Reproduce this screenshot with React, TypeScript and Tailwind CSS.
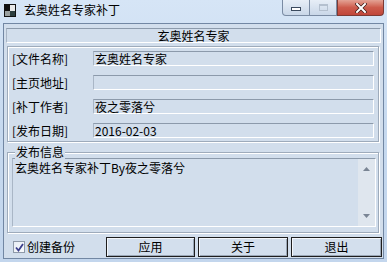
import React from "react";

const sunken =
  "border-t border-l border-t-[#8c9aab] border-l-[#a9b6c6] border-b border-r border-b-white border-r-white";

function Field({ label, value }: { label: string; value: string }) {
  return (
    <div className="flex items-center h-[15px]">
      <div className="w-[85px] pl-[4px] text-[12px] leading-[15px] text-black whitespace-nowrap">{label}</div>
      <div className={`w-[281px] h-[15px] ${sunken} text-[12px] leading-[13px] pl-[1px] text-black whitespace-nowrap`}>
        {value}
      </div>
    </div>
  );
}

function Btn({ children, w }: { children: React.ReactNode; w: string }) {
  return (
    <div
      className={`${w} h-[20px] border border-[#1e1e1e] shadow-[inset_1px_1px_0_#f4f7fb,inset_-1px_-1px_0_#9aa7b7] bg-[#d3dfed] flex items-center justify-center text-[12px] leading-none text-black`}
    >
      {children}
    </div>
  );
}

export default function App() {
  return (
    <div className="w-[387px] h-[262px] overflow-hidden bg-gradient-to-b from-[#d6e5f6] via-[#c6d9ef] to-[#c3d6ed] flex flex-col font-['Noto_Sans_CJK_SC','Noto_Sans',sans-serif]">
      {/* Title bar */}
      <div className="h-[23px] flex items-start shrink-0">
        <div className="ml-[4px] mt-[4px] w-[12px] h-[13px] grid grid-cols-2 grid-rows-2 border border-[#111]">
          <div className="bg-[#101010]" />
          <div className="bg-[#e8e8e8]" />
          <div className="bg-[#9aa0a0]" />
          <div className="bg-[#2c3e3e]" />
        </div>
        <div className="ml-[8px] mt-[3px] text-[12px] leading-[14px] text-black whitespace-nowrap">玄奥姓名专家补丁</div>
        <div className="ml-auto mr-[3px] flex h-[16px]">
          <div className="w-[28px] h-[16px] border border-[#7a8ba3] border-t-0 rounded-bl-[4px] bg-gradient-to-b from-[#e7eef7] to-[#c9d7e8] flex items-center justify-center">
            <div className="mt-[3px] w-[10px] h-[4px] bg-white border border-[#3b4a5e]" />
          </div>
          <div className="w-[27px] h-[16px] border-b border-r border-[#7a8ba3] bg-gradient-to-b from-[#e7eef7] to-[#c9d7e8] flex items-center justify-center">
            <div className="w-[9px] h-[7px] border border-[#b4c0cf] border-t-2" />
          </div>
          <div className="w-[47px] h-[16px] border border-t-0 border-[#7d3a34] rounded-br-[4px] bg-gradient-to-b from-[#e3a295] via-[#cd5b4c] to-[#c0463a] flex items-center justify-center">
            <svg width="12" height="10" viewBox="0 0 12 10">
              <path d="M2 1 L10 9 M10 1 L2 9" stroke="#3b1a16" strokeWidth="3.4" strokeLinecap="square" />
              <path d="M2 1 L10 9 M10 1 L2 9" stroke="#ffffff" strokeWidth="2" strokeLinecap="square" />
            </svg>
          </div>
        </div>
      </div>

      {/* Client area */}
      <div className="mx-[3px] h-[236px] border border-[#7287a3] bg-[#d2deec] flex flex-col shrink-0">
        {/* Header */}
        <div className={`mt-[4px] ml-[2px] w-[375px] h-[15px] ${sunken} flex items-center justify-center text-[12px] leading-[13px] text-black`}>
          玄奥姓名专家
        </div>

        {/* Group 1 */}
        <div className="mt-[3px] ml-[3px] w-[372px] h-[96px] border border-[#9eabbb] shadow-[inset_1px_1px_0_#ffffff,1px_1px_0_#ffffff] flex flex-col gap-[9px] pt-[4px]">
          <Field label="[文件名称]" value="玄奥姓名专家" />
          <Field label="[主页地址]" value="" />
          <Field label="[补丁作者]" value="夜之零落兮" />
          <Field label="[发布日期]" value="2016-02-03" />
        </div>

        {/* Group 2 */}
        <div className="relative mt-[10px] ml-[3px] w-[372px] h-[81px] border border-[#9eabbb] shadow-[inset_1px_1px_0_#ffffff,1px_1px_0_#ffffff] pt-[5px] pl-[4px]">
          <div className="absolute left-[7px] top-[-9px] bg-[#d2deec] px-[1px] text-[12px] leading-[15px] text-black">发布信息</div>
          <div className={`w-[364px] h-[69px] ${sunken} flex`}>
            <div className="flex-1 pl-[2px] pt-[1px] text-[12px] leading-[15px] text-black whitespace-nowrap">
              玄奥姓名专家补丁By夜之零落兮
            </div>
            <div className="w-[17px] h-full bg-[#dfe6ee] flex flex-col items-center justify-between py-[8px]">
              <svg width="7" height="4" viewBox="0 0 7 4"><path d="M0 4 L3.5 0 L7 4 Z" fill="#7a8594" /></svg>
              <svg width="7" height="4" viewBox="0 0 7 4"><path d="M0 0 L3.5 4 L7 0 Z" fill="#7a8594" /></svg>
            </div>
          </div>
        </div>

        {/* Bottom row */}
        <div className="mt-[4px] flex items-start h-[20px]">
          <div className="ml-[9px] mt-[4px] w-[12px] h-[12px] border border-[#8e99a8] bg-gradient-to-br from-[#e9eef5] to-[#f8fafc] flex items-center justify-center">
            <svg width="9" height="9" viewBox="0 0 9 9">
              <path d="M1 4.5 L3.5 7.5 L8 1" stroke="#3b3f8c" strokeWidth="1.8" fill="none" />
            </svg>
          </div>
          <div className="ml-[2px] mt-[2px] text-[12px] leading-[15px] text-black whitespace-nowrap">创建备份</div>
          <div className="ml-auto mr-[1px] flex gap-[3px]">
            <Btn w="w-[89px]">应用</Btn>
            <Btn w="w-[90px]">关于</Btn>
            <Btn w="w-[91px]">退出</Btn>
          </div>
        </div>
      </div>
    </div>
  );
}
